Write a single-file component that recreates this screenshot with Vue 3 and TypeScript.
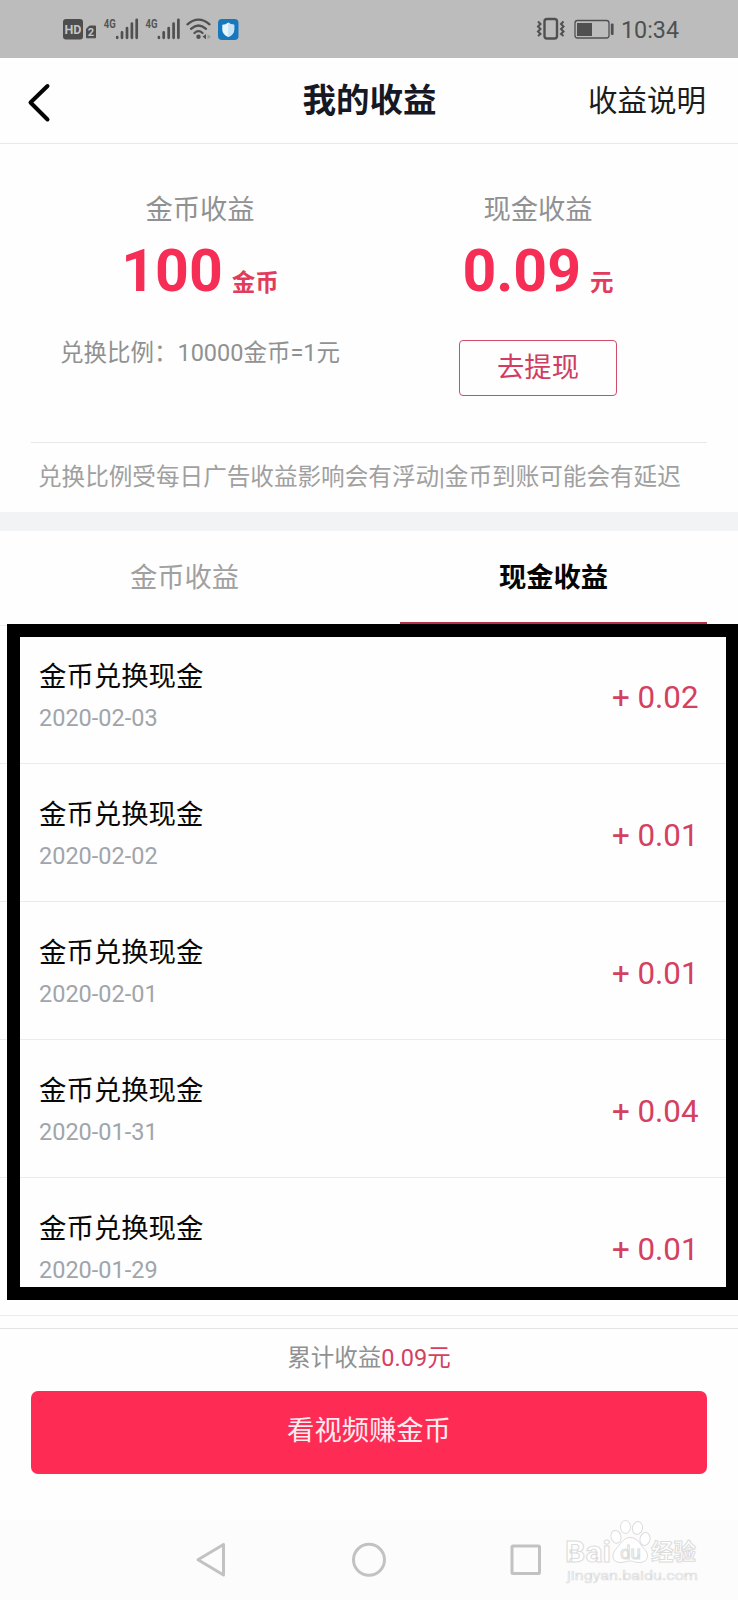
<script setup lang="ts">
interface IncomeRecord {
  title: string
  date: string
  amount: string
}

const records: IncomeRecord[] = [
  { title: '金币兑换现金', date: '2020-02-03', amount: '+ 0.02' },
  { title: '金币兑换现金', date: '2020-02-02', amount: '+ 0.01' },
  { title: '金币兑换现金', date: '2020-02-01', amount: '+ 0.01' },
  { title: '金币兑换现金', date: '2020-01-31', amount: '+ 0.04' },
  { title: '金币兑换现金', date: '2020-01-29', amount: '+ 0.01' },
]
</script>

<template>
  <div class="screen">
    <div class="status">
      <svg class="status-left" width="180" height="26" viewBox="0 0 180 26">
        <rect x="1" y="3" width="20" height="20.500" rx="3" fill="#4d4d4d" />
        <text x="11" y="17.800" font-size="12.500" font-weight="700" text-anchor="middle" fill="#c4c4c4">HD</text>
        <path d="M24.500 13L27.500 10H33.500V21.800H24.500Z" fill="#4d4d4d" stroke="#4d4d4d" stroke-linejoin="round" />
        <text x="29" y="20" font-size="11" font-weight="700" text-anchor="middle" fill="#c4c4c4">2</text>
        <g v-for="x in [0, 41.7]" :key="x" :transform="`translate(${x} 0)`">
          <text x="41.800" y="12" font-size="12.500" font-weight="700" textLength="12" lengthAdjust="spacingAndGlyphs" fill="#555">4G</text>
          <g stroke="#505050" stroke-width="2.700" stroke-linecap="round">
            <path d="M55.200 21.200V21.800M60 16.300V21.800M65 12V21.800M69.900 7.500V21.800M74.700 3.800V21.800" />
          </g>
        </g>
        <g fill="none" stroke="#505050" stroke-width="2.300" stroke-linecap="round">
          <path d="M125.500 8.300Q136.500 -1 147.500 8.300" />
          <path d="M129 12.800Q136.500 6.300 144 12.800" />
          <path d="M132.500 17Q136.500 13.300 140.500 17" />
        </g>
        <circle cx="136.500" cy="20.800" r="2.200" fill="#505050" />
        <path d="M140.500 20.800L144 18V23.300Z" fill="#505050" />
        <path d="M145.500 18.300L149 20.800L145.500 23.300Z" fill="#999" />
        <rect x="156" y="3" width="20.500" height="21" rx="4" fill="#1878bd" />
        <path d="M166.200 6.500Q169 8.800 172.200 8.700V14Q172 18.500 166.200 21Q160.500 18.500 160.300 14V8.700Q163.500 8.800 166.200 6.500Z" fill="#e8f5fb" />
        <path d="M166.200 6.500Q169 8.800 172.200 8.700V14Q172 18.500 166.200 21Z" fill="#c5e3f3" />
      </svg>
      <div class="status-right">
        <svg width="80" height="26" viewBox="0 0 80 26">
          <g fill="none" stroke="#505050">
            <rect x="9.500" y="3" width="12.500" height="19.500" rx="2.500" stroke-width="2.400" />
            <path d="M3 5.500l2.500 2.500-2.500 2.500 2.500 2.500-2.500 2.500 2.500 2.500-2.500 2M28.500 5.500l-2.500 2.500 2.500 2.500-2.500 2.500 2.500 2.500-2.500 2.500 2.500 2" stroke-width="2" />
            <rect x="40" y="4.500" width="34" height="17.500" rx="2.500" stroke-width="1.300" />
          </g>
          <rect x="42" y="7" width="15" height="13" fill="#505050" />
          <rect x="75.800" y="7.500" width="2.800" height="11.500" rx="1" fill="#505050" />
        </svg>
        <span class="clock">10:34</span>
      </div>
    </div>

    <header class="header">
      <svg class="back" width="26" height="42" viewBox="0 0 26 42">
        <path d="M20.500 4L3.500 20.500L20.500 37.500" fill="none" stroke="#050505" stroke-width="4" stroke-linecap="round" stroke-linejoin="round" />
      </svg>
      <h1 class="title">我的收益</h1>
      <span class="explain">收益说明</span>
    </header>

    <section class="summary">
      <div class="balances">
        <div class="balance">
          <div class="label">金币收益</div>
          <div class="value"><span class="number">100</span><span class="unit">金币</span></div>
          <div class="ratio">兑换比例：10000金币=1元</div>
        </div>
        <div class="balance">
          <div class="label">现金收益</div>
          <div class="value"><span class="number">0.09</span><span class="unit">元</span></div>
          <button class="withdraw">去提现</button>
        </div>
      </div>
      <p class="note">兑换比例受每日广告收益影响会有浮动|金币到账可能会有延迟</p>
    </section>

    <nav class="tabs">
      <div class="tab">金币收益</div>
      <div class="tab active">现金收益</div>
    </nav>

    <div class="records">
      <div v-for="r in records" :key="r.date" class="record">
        <div class="info">
          <div class="name">{{ r.title }}</div>
          <div class="date">{{ r.date }}</div>
        </div>
        <div class="amount">{{ r.amount }}</div>
      </div>
      <div class="highlight"></div>
    </div>

    <footer class="footer">
      <div class="total">累计收益<span class="red">0.09元</span></div>
      <button class="watch">看视频赚金币</button>
    </footer>

    <div class="system-nav">
      <svg width="738" height="80" viewBox="0 0 738 80">
        <g fill="none" stroke="#c2c2c2" stroke-width="3" stroke-linejoin="round">
          <path d="M198 39.800L223.500 24.500V55Z" />
          <circle cx="369" cy="39.800" r="15.500" />
          <rect x="512" y="26" width="27.500" height="27.500" rx="1" />
        </g>
        <g class="mark" fill="#fff" stroke="#dcdcdc" stroke-width="1">
          <text x="565" y="41.500" font-size="30" font-weight="700" textLength="46" lengthAdjust="spacingAndGlyphs">Bai</text>
          <ellipse cx="616" cy="16.800" rx="5" ry="6.500" transform="rotate(-15 616 16.800)" />
          <ellipse cx="625.500" cy="7" rx="5" ry="6.500" />
          <ellipse cx="637.500" cy="8" rx="5" ry="6.500" transform="rotate(12 637.500 8)" />
          <ellipse cx="645" cy="19" rx="5" ry="6.500" transform="rotate(15 645 19)" />
          <path d="M630 17.500C638 17.500 640 25 644 28.500C650 34 648 42.500 640 42.500C634 42.500 634 41 630 41C626 41 625 42.500 620 42.500C612 42.500 611 34 616 29C620 25 623 17.500 630 17.500Z" />
          <text x="620" y="38.500" font-size="19" textLength="21" lengthAdjust="spacingAndGlyphs">du</text>
          <text x="651" y="39.500" font-size="22.500" font-weight="700">经验</text>
          <text x="567" y="59.500" font-size="13" textLength="131" lengthAdjust="spacingAndGlyphs" stroke-width=".6">jingyan.baidu.com</text>
        </g>
      </svg>
    </div>
  </div>
</template>

<style>
body {
  margin: 0;
  background: #fff;
}
</style>

<style scoped>
.screen {
  width: 738px;
  height: 1600px;
  display: flex;
  flex-direction: column;
  overflow: hidden;
  background: #fefefe;
  font-family: Roboto, "Noto Sans CJK SC", sans-serif;
}

.screen > * {
  box-sizing: border-box;
  flex-shrink: 0;
}

.status {
  height: 58px;
  padding: 0 59px 0 62px;
  display: flex;
  align-items: center;
  justify-content: space-between;
  background: #bcbcbc;
}

.status-left {
  margin-top: -1px;
}

.status-right {
  display: flex;
  align-items: center;
  gap: 6px;
}

.clock {
  color: #505050;
  font-size: 23.300px;
  line-height: 26px;
  margin-top: 1px;
}

.header {
  height: 86px;
  padding: 0 32px 0 27px;
  display: grid;
  grid-template-columns: 1fr auto 1fr;
  align-items: center;
  border-bottom: 1px solid #e9e9e9;
}

.back {
  margin-top: 5px;
}

.title {
  margin: 0 0 0 6px;
  font-size: 33.500px;
  line-height: 40px;
  font-weight: 700;
  color: #161823;
}

.explain {
  justify-self: end;
  font-size: 29.500px;
  line-height: 40px;
  color: #1c1c1c;
}

.summary {
  height: 387px;
  padding: 0 31px;
  border-bottom: 19px solid #f2f3f5;
}

.balances {
  height: 299px;
  box-sizing: border-box;
  padding-top: 48px;
  display: grid;
  grid-template-columns: 1fr 1fr;
  border-bottom: 1px solid #e8e8e8;
}

.balance {
  display: flex;
  flex-direction: column;
  align-items: center;
}

.label {
  font-size: 27.300px;
  line-height: 36px;
  color: #909192;
}

.value {
  height: 83px;
  display: flex;
  align-items: baseline;
  gap: 9px;
  color: #f62e56;
  font-weight: 700;
}

.number {
  font-size: 59px;
  line-height: 86px;
}

.unit {
  font-size: 23.500px;
  color: #e23b5c;
}

.ratio {
  margin-top: 26px;
  line-height: 32px;
  font-size: 23.500px;
  color: #909192;
}

.withdraw {
  margin-top: 29px;
  width: 158px;
  height: 56px;
  padding: 0;
  border: 1px solid #cf4d69;
  border-radius: 4px;
  background: transparent;
  font-family: inherit;
  font-size: 27.300px;
  line-height: 54px;
  color: #d13c60;
}

.note {
  margin: 0;
  padding-left: 7px;
  white-space: nowrap;
  font-size: 23.600px;
  line-height: 68px;
  color: #a0a0a0;
}

.tabs {
  height: 95px;
  padding: 0 31px;
  display: grid;
  grid-template-columns: 307px 307px;
  justify-content: space-between;
  border-bottom: 1px solid #eee;
}

.tab {
  text-align: center;
  box-sizing: border-box;
  font-size: 27.300px;
  line-height: 94px;
  height: 94px;
  color: #a0a0a0;
}

.active {
  color: #050505;
  font-weight: 700;
  border-bottom: 3px solid #b6304c;
}

.records {
  position: relative;
  height: 690px;
}

.highlight {
  position: absolute;
  left: 7px;
  top: -2px;
  width: 732px;
  height: 676px;
  box-sizing: border-box;
  border: 13px solid #000;
}

.record {
  height: 138px;
  box-sizing: border-box;
  padding: 33px 38px 0 39px;
  display: flex;
  justify-content: space-between;
  border-bottom: 1px solid #ebebeb;
}

.name {
  font-size: 27.400px;
  line-height: 36px;
  color: #080808;
}

.date {
  margin-top: 6px;
  font-size: 23.500px;
  line-height: 34px;
  color: #a1a5aa;
}

.amount {
  width: 88px;
  margin-top: 19px;
  font-size: 31.300px;
  line-height: 40px;
  color: #d4405f;
  white-space: nowrap;
}

.footer {
  height: 204px;
  padding: 0 31px;
  display: flex;
  flex-direction: column;
  align-items: stretch;
}

.total {
  margin: 12px -31px 0;
  padding-top: 9px;
  border-top: 1px solid #e4e4e4;
  text-align: center;
  font-size: 23.500px;
  line-height: 40px;
  color: #8f9193;
}

.red {
  color: #d4405f;
}

.watch {
  margin-top: 13px;
  height: 83px;
  padding: 0 0 2px;
  border: 0;
  border-radius: 7px;
  background: #fe2c55;
  font-family: inherit;
  font-size: 27.300px;
  line-height: 81px;
  color: #ffecf0;
}

.system-nav {
  height: 80px;
  background: #fcfcfc;
}

.mark text {
  font-family: Roboto, "Noto Sans CJK SC", sans-serif;
}
</style>
